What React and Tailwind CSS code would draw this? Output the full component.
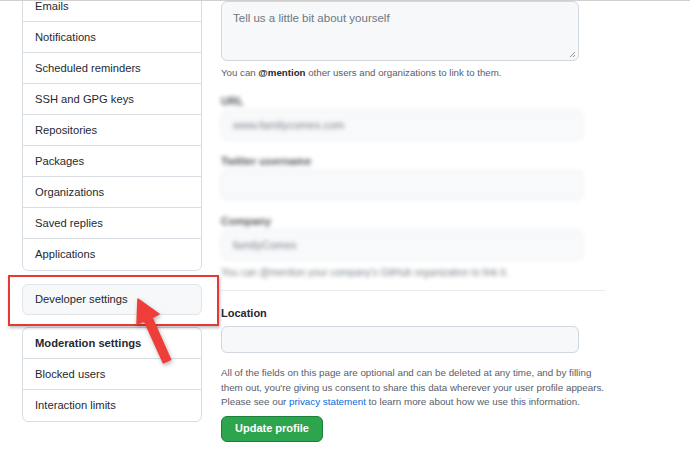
import React from 'react';

const font = { fontFamily: '"Liberation Sans", Arial, sans-serif' };

const mainItems = [
  'Emails',
  'Notifications',
  'Scheduled reminders',
  'SSH and GPG keys',
  'Repositories',
  'Packages',
  'Organizations',
  'Saved replies',
  'Applications',
];

function SideRow({ label, bold, h = 'h-[31px]' }) {
  return (
    <div className={`${h} flex items-center pl-[12px] text-[11.2px] text-[#24292f] ${bold ? 'font-bold' : ''}`}>
      {label}
    </div>
  );
}

function BlurField({ label, value, help }) {
  return (
    <div className="mt-[13px]">
      <div className="h-[14px] text-[11px] font-bold text-[#24292f]">{label}</div>
      <div className="mt-[3px] h-[30px] w-[362px] rounded-md border border-[#e1e4e8] bg-[#f6f8fa] flex items-center px-[11px] text-[11px] text-[#57606a]">
        {value}
      </div>
      {help && <div className="mt-[5px] h-[14px] text-[10px] text-[#57606a]">{help}</div>}
    </div>
  );
}

export default function App() {
  return (
    <div className="w-[690px] h-[464px] bg-white border-t border-[#d0d0d0]" style={font}>
      <div className="relative h-[463px] overflow-hidden">
        <div className="flex">
          {/* Sidebar */}
          <div className="ml-[22px] w-[180px] -mt-[11px] shrink-0">
            <div className="border border-[#d8dee4] rounded-md divide-y divide-[#d8dee4]">
              {mainItems.map((item) => (
                <SideRow key={item} label={item} />
              ))}
            </div>
            <div className="mt-[13px] border border-[#e1e4e8] rounded-md bg-[#f6f8fa]">
              <SideRow label="Developer settings" h="h-[29px]" />
            </div>
            <div className="mt-[12px] border border-[#d8dee4] rounded-md divide-y divide-[#d8dee4]">
              <SideRow label="Moderation settings" bold />
              <SideRow label="Blocked users" />
              <SideRow label="Interaction limits" />
            </div>
          </div>

          {/* Profile form */}
          <div className="ml-[19px] w-[388px]">
            <div className="relative h-[60px] w-[358px] rounded-md border border-[#d0d7de] bg-[#f6f8fa] px-[11px] pt-[8px] text-[11.5px] text-[#6e7781]">
              Tell us a little bit about yourself
              <svg className="absolute right-[2px] bottom-[2px]" width="7" height="7" viewBox="0 0 7 7">
                <path d="M6 1 L1 6 M6 4 L4 6" stroke="#8c959f" strokeWidth="1" />
              </svg>
            </div>
            <div className="mt-[5px] h-[14px] leading-[14px] text-[9.7px] text-[#57606a]">
              You can <span className="font-bold text-[#24292f]">@mention</span> other users and organizations to link to them.
            </div>

            <div className="blur-[2px] opacity-80">
              <BlurField label="URL" value="www.familycomex.com" />
              <BlurField label="Twitter username" value="" />
              <BlurField label="Company" value="familyComex" help="You can @mention your company's GitHub organization to link it." />
            </div>

            <div className="mt-[11px] h-px w-[384px] bg-[#e8eaed]" />

            <div className="mt-[15px] h-[14px] leading-[14px] text-[11px] font-bold text-[#24292f]">Location</div>
            <div className="mt-[6px] h-[27px] w-[358px] rounded-md border border-[#d0d7de] bg-[#f6f8fa]" />

            <p className="mt-[13px] w-[388px] text-[9.8px] leading-[14.5px] text-[#57606a]">
              All of the fields on this page are optional and can be deleted at any time, and by filling them out, you're giving us consent to share this data wherever your user profile appears. Please see our <span className="text-[#0969da]">privacy statement</span> to learn more about how we use this information.
            </p>

            <button className="mt-[6px] h-[26px] w-[102px] rounded-md border border-[#1a7f37] bg-[#2da44e] text-[11px] font-bold text-white">
              Update profile
            </button>
          </div>
        </div>

        {/* Annotation: red box */}
        <div className="absolute left-[8px] top-[274px] w-[211px] h-[51px] border-2 border-[#e53935] shadow-[1px_2px_3px_rgba(0,0,0,0.25)]" />

        {/* Annotation: arrow */}
        <svg className="absolute left-0 top-0 drop-shadow-[1px_2px_2px_rgba(0,0,0,0.3)]" width="690" height="463" viewBox="0 0 690 463">
          <polygon
            points="138,298 159,313 152,316.5 170.6,358.5 163.4,361.9 144.4,320 137,323"
            fill="#ef3e3a"
            stroke="#ef3e3a"
            strokeWidth="1.5"
            strokeLinejoin="round"
          />
        </svg>
      </div>
    </div>
  );
}
